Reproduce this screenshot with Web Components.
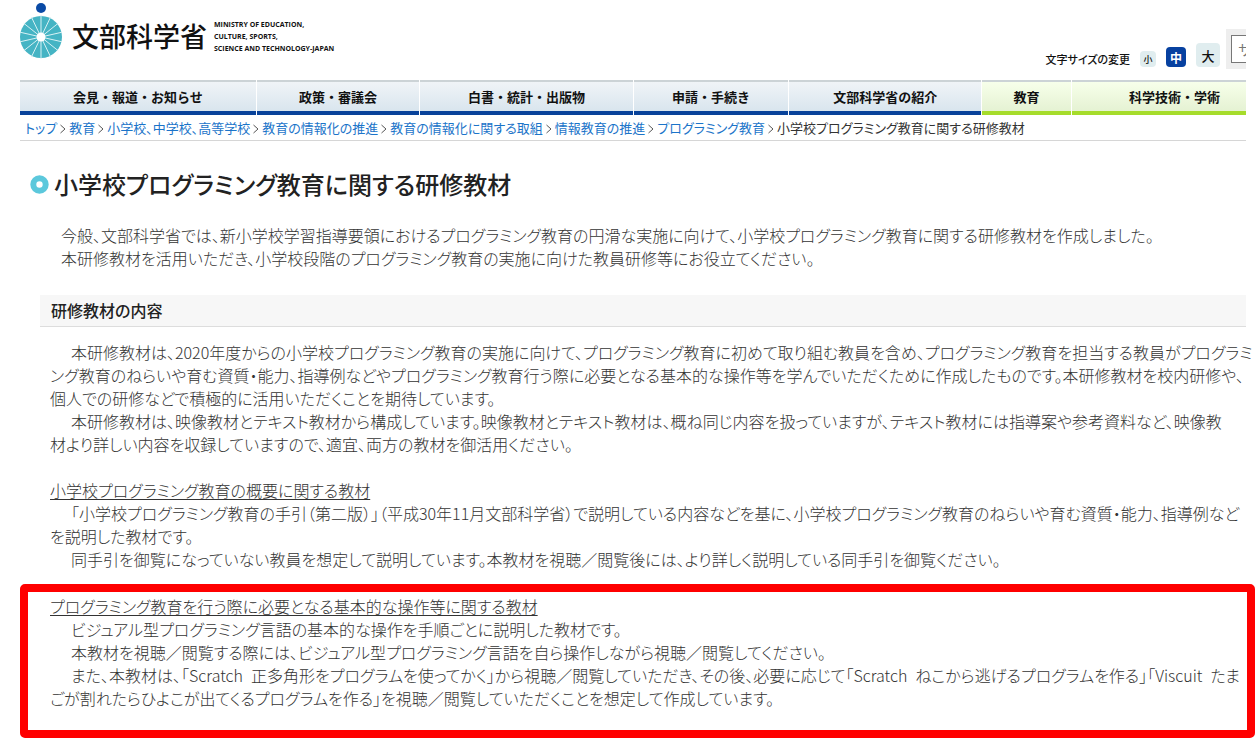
<!DOCTYPE html>
<html lang="ja">
<head>
<meta charset="utf-8">
<title>小学校プログラミング教育に関する研修教材</title>
<style>
body{margin:0;background:#fff;color:#333;font-family:"Noto Sans CJK JP","Liberation Sans",sans-serif;font-feature-settings:"palt";overflow-x:hidden}
</style>
</head>
<body>
<site-page></site-page>
<script>
const define = (name, html) => {
  const t = document.createElement('template');
  t.innerHTML = html;
  customElements.define(name, class extends HTMLElement {
    constructor() {
      super();
      this.attachShadow({mode: 'open'}).append(t.content.cloneNode(true));
    }
  });
};

customElements.define('site-emblem', class extends HTMLElement {
  constructor() {
    super();
    let rays = '';
    for (let i = 0; i < 14; i++) {
      const a = i * Math.PI / 7;
      rays += `<line x1="21" y1="33" x2="${21 + 22 * Math.sin(a)}" y2="${33 - 22 * Math.cos(a)}"/>`;
    }
    this.attachShadow({mode: 'open'}).innerHTML = `
      <style>:host{display:block}svg{display:block}</style>
      <svg width="42" height="56" viewBox="0 0 42 56" aria-hidden="true">
        <circle cx="21" cy="5" r="5" fill="#0a4aa5"/>
        <circle cx="21" cy="34" r="21" fill="#45b4c4"/>
        <g stroke="#d8f1f4" stroke-width="1" transform="translate(0 1)">${rays}</g>
        <circle cx="21" cy="34" r="4.5" fill="#fff"/>
      </svg>`;
  }
});

define('site-logo', `
<style>
:host{display:block}
a{display:flex;align-items:flex-start;color:#111;text-decoration:none}
.ja{font-size:27px;line-height:32px;font-weight:500;margin:17px 0 0 10px;white-space:nowrap;font-feature-settings:normal}
.en{font:bold 7px/12px "Open Sans","Noto Sans",sans-serif;margin:16px 0 0 7px;white-space:nowrap}
</style>
<a href="#"><site-emblem></site-emblem><span class="ja">文部科学省</span>
<span class="en">MINISTRY OF EDUCATION,<br>CULTURE, SPORTS,<br>SCIENCE AND TECHNOLOGY-JAPAN</span></a>`);

define('size-switch', `
<style>
:host{display:flex;align-items:flex-end;gap:10px}
span{font-size:11px;line-height:16px;color:#111;font-weight:500;white-space:nowrap}
button{border:0;padding:0;border-radius:4px;background:#e0edef;color:#111;font-family:inherit;font-weight:500;display:grid;place-items:center}
.s{width:16px;height:16px;font-size:9px}
.m{width:20px;height:20px;font-size:12px;background:#0741a0;color:#fff;font-weight:700}
.l{width:24px;height:24px;font-size:13px}
</style>
<span>文字サイズの変更</span>
<button class="s">小</button><button class="m">中</button><button class="l">大</button>`);

define('site-search', `
<style>
:host{display:block;width:20px;height:40px;overflow:hidden;background:#eee}
input{box-sizing:border-box;width:160px;height:28px;margin:6px 0 0 5px;padding:0 6px;border:1px solid #777;background:#fff;font:14px "Noto Sans CJK JP",sans-serif}
input::placeholder{color:#777}
</style>
<input type="search" aria-label="サイト内検索" placeholder="サ">`);

define('site-header', `
<style>
:host{display:flex;justify-content:space-between;height:80px}
site-logo{padding-top:3px}
.tools{display:flex;align-items:flex-start;gap:6px}
size-switch{margin-top:43px}
site-search{margin-top:29px}
</style>
<site-logo></site-logo>
<div class="tools"><size-switch></size-switch><site-search></site-search></div>`);

define('site-nav', `
<style>
:host{display:block}
nav{display:grid;grid-template-columns:237fr 163fr 214fr 155fr 193fr 89fr 175fr;gap:1px}
a{box-sizing:border-box;height:35px;line-height:30px;text-align:center;border-top:2px solid #ccd3d6;border-bottom:4px solid #08429a;background:linear-gradient(#f0f4f7,#d9e5ee);color:#111;font-size:13px;font-weight:700;text-decoration:none;white-space:nowrap;overflow:hidden;font-feature-settings:normal}
.g{border-bottom-color:#a6dc2b;background:linear-gradient(#f7ffea,#e5f2d3)}
.last{padding-left:31px}
</style>
<nav>
<a href="#">会見・報道・お知らせ</a><a href="#">政策・審議会</a><a href="#">白書・統計・出版物</a><a href="#">申請・手続き</a><a href="#">文部科学省の紹介</a><a href="#" class="g">教育</a><a href="#" class="g last">科学技術・学術</a>
</nav>`);

customElements.define('crumb-trail', class extends HTMLElement {
  constructor() {
    super();
    const items = ['トップ','教育','小学校、中学校、高等学校','教育の情報化の推進','教育の情報化に関する取組','情報教育の推進','プログラミング教育'];
    const sep = '<svg viewBox="0 0 6 10" aria-hidden="true"><path d="M.5 1 5 5 .5 9"/></svg>';
    this.attachShadow({mode: 'open'}).innerHTML = `
<style>
:host{display:block;border-bottom:1px solid #d6d6d6}
nav{display:flex;gap:3px;height:25px;line-height:26px;padding-left:5px;font-size:13px;white-space:nowrap}
a{color:#1b74c9;text-decoration:none}
svg{width:6px;height:10px;margin-top:9px;fill:none;stroke:#555;flex:none}
</style>
<nav>${items.map(i => `<a href="#">${i}</a>${sep}`).join('')}<span>小学校プログラミング教育に関する研修教材</span></nav>`;
  }
});

define('page-title', `
<style>
:host{display:flex;align-items:center;gap:5px;padding-left:10px}
svg{width:19px;height:19px}
h1{margin:0;font-size:24px;line-height:32px;font-weight:500;color:#222;white-space:nowrap}
</style>
<svg viewBox="0 0 19 19" aria-hidden="true"><circle cx="9.5" cy="9.5" r="6.2" fill="none" stroke="#5cc8dc" stroke-width="6"/></svg>
<h1><slot></slot></h1>`);

define('section-title', `
<style>
:host{display:block;background:#f7f7f7;border-bottom:1px solid #ddd;padding-left:11px}
h2{margin:0;font-size:16px;line-height:31px;font-weight:500;color:#222}
</style>
<h2><slot></slot></h2>`);

define('text-block', `
<style>
:host{display:block;font-size:16px;line-height:23px;font-weight:300;white-space:nowrap}
::slotted(p){margin:0;text-indent:21px}
::slotted(h3){margin:0;font-size:16px;font-weight:300;text-decoration:underline;text-underline-offset:2px}
</style>
<slot></slot>`);

define('site-page', `
<style>
:host{display:block;padding-left:20px}
.main{margin-right:9px}
page-title{margin-top:27px}
.intro{margin:24px 0 0 20px}
section-title{margin:25px 0 0 20px}
.body{margin:14px 0 0 30px}
.next{margin-top:23px}
.mark{border:8px solid #f00;border-radius:5px;padding:3px 0 20px 22px;margin-top:13px}
</style>
<div class="main">
<site-header></site-header>
<site-nav></site-nav>
<crumb-trail></crumb-trail>
<page-title>小学校プログラミング教育に関する研修教材</page-title>
<text-block class="intro">
<p>今般、文部科学省では、新小学校学習指導要領におけるプログラミング教育の円滑な実施に向けて、小学校プログラミング教育に関する研修教材を作成しました。</p>
<p>本研修教材を活用いただき、小学校段階のプログラミング教育の実施に向けた教員研修等にお役立てください。</p>
</text-block>
<section-title>研修教材の内容</section-title>
<text-block class="body">
<p>本研修教材は、2020年度からの小学校プログラミング教育の実施に向けて、プログラミング教育に初めて取り組む教員を含め、プログラミング教育を担当する教員がプログラミ<br>ング教育のねらいや育む資質・能力、指導例などやプログラミング教育行う際に必要となる基本的な操作等を学んでいただくために作成したものです。本研修教材を校内研修や、<br>個人での研修などで積極的に活用いただくことを期待しています。</p>
<p>本研修教材は、映像教材とテキスト教材から構成しています。映像教材とテキスト教材は、概ね同じ内容を扱っていますが、テキスト教材には指導案や参考資料など、映像教<br>材より詳しい内容を収録していますので、適宜、両方の教材を御活用ください。</p>
</text-block>
<text-block class="body next">
<h3>小学校プログラミング教育の概要に関する教材</h3>
<p>「小学校プログラミング教育の手引（第二版）」（平成30年11月文部科学省）で説明している内容などを基に、小学校プログラミング教育のねらいや育む資質・能力、指導例など<br>を説明した教材です。</p>
<p>同手引を御覧になっていない教員を想定して説明しています。本教材を視聴／閲覧後には、より詳しく説明している同手引を御覧ください。</p>
</text-block>
</div>
<div class="mark">
<text-block>
<h3>プログラミング教育を行う際に必要となる基本的な操作等に関する教材</h3>
<p>ビジュアル型プログラミング言語の基本的な操作を手順ごとに説明した教材です。</p>
<p>本教材を視聴／閲覧する際には、ビジュアル型プログラミング言語を自ら操作しながら視聴／閲覧してください。</p>
<p>また、本教材は、「Scratch&ensp;正多角形をプログラムを使ってかく」から視聴／閲覧していただき、その後、必要に応じて「Scratch&ensp;ねこから逃げるプログラムを作る」「Viscuit&ensp;たま<br>ごが割れたらひよこが出てくるプログラムを作る」を視聴／閲覧していただくことを想定して作成しています。</p>
</text-block>
</div>`);
</script>
</body>
</html>
